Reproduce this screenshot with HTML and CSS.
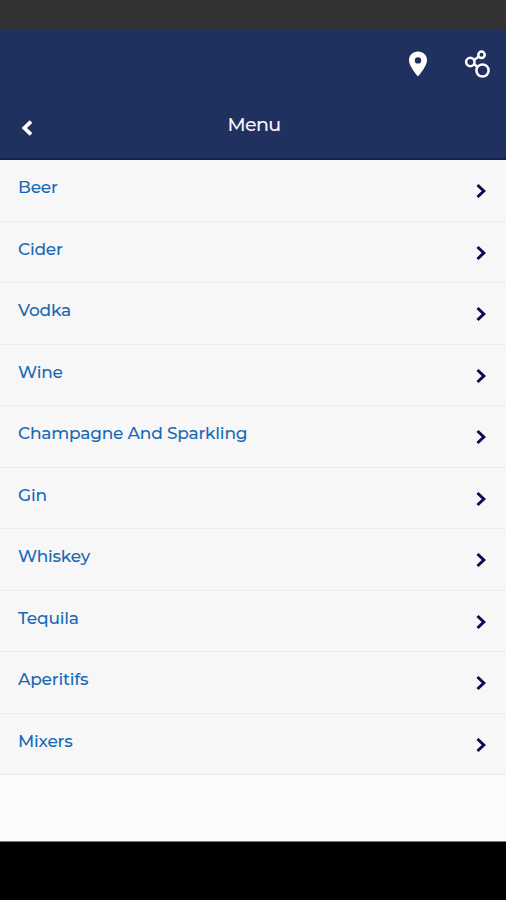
FILE: index.html
```html
<!DOCTYPE html>
<html lang="en">
<head>
<meta charset="utf-8">
<title>Menu</title>
<link rel="stylesheet" href="styles.css">
</head>
<body>
<div class="status"></div>
<header class="header">
  <div class="actions">
    <span class="pin"><svg width="20" height="28" viewBox="0 0 20 28"><path fill="#fff" fill-rule="evenodd" d="M10 1.500C4.800 1.500 1 5.300 1 10.300 1 16.500 10 26.500 10 26.500s9-10 9-16.200C19 5.300 15.200 1.500 10 1.500zm0 5.700a3.200 3.200 0 1 1 0 6.400 3.200 3.200 0 0 1 0-6.400z"/></svg></span>
    <svg class="share" width="28" height="30" viewBox="0 0 28 30" fill="none" stroke="#fff" stroke-width="2.500"><circle cx="7.300" cy="13" r="4.200"/><circle cx="18.500" cy="5.800" r="3.200"/><circle cx="19.500" cy="21.500" r="6.100"/><path d="M11 11l5-3.500M11 15l3.500 3"/></svg>
  </div>
  <div class="bar">
    <svg class="back" width="12" height="16" viewBox="0 0 12 16" fill="none" stroke="#fff" stroke-width="3.800"><path d="M11 1.500L4.300 8l6.700 6.500"/></svg>
    <h1 class="title">Menu</h1>
  </div>
</header>
<ul class="list" id="list"></ul>
<div class="space"></div>
<footer class="nav"></footer>
<script src="app.js"></script>
</body>
</html>
```
FILE: styles.css
```css
* { box-sizing: border-box; }
body { margin: 0; height: 900px; display: flex; flex-direction: column; background: #fbfbfb; font-family: Montserrat, "Open Sans", sans-serif; overflow: hidden; }
.status { height: 30px; background: #333; }
.header { height: 130px; background: #20315f; border-bottom: 2px solid #14224f; }
.actions { height: 68px; display: flex; justify-content: flex-end; align-items: center; padding-right: 15px; gap: 23px; }
.pin { display: flex; width: 44px; justify-content: center; }
.bar { display: flex; padding: 13px 20px 0; }
.back { margin-top: 9px; }
.title { flex: 1; margin: 0 14px 0 4px; text-align: center; color: #f5f5fa; font-size: 19px; font-weight: 500; line-height: 28px; letter-spacing: -0.6px; }
.list { margin: 0; padding: 0; list-style: none; background: #f7f7f7; }
.row { height: 61.500px; border-bottom: 1px solid #ebebeb; display: flex; justify-content: space-between; padding: 15px 20px 0 18px; color: #1769b4; font-size: 17px; font-weight: 500; line-height: 24.800px; letter-spacing: -0.22px; }
.chevron { margin-top: 8px; }
.space { flex: 1; }
.nav { height: 59px; background: #000; border-top: 1px solid #777; }
```
FILE: app.js
```js
const items = ["Beer", "Cider", "Vodka", "Wine", "Champagne And Sparkling", "Gin", "Whiskey", "Tequila", "Aperitifs", "Mixers"];
document.getElementById("list").innerHTML = items.map(t => `<li class="row"><span>${t}</span><svg class="chevron" width="10" height="16" viewBox="0 0 10 16" fill="none" stroke="#0d0850" stroke-width="3"><path d="M1.500 2L7.800 8l-6.300 6"/></svg></li>`).join("");
```
